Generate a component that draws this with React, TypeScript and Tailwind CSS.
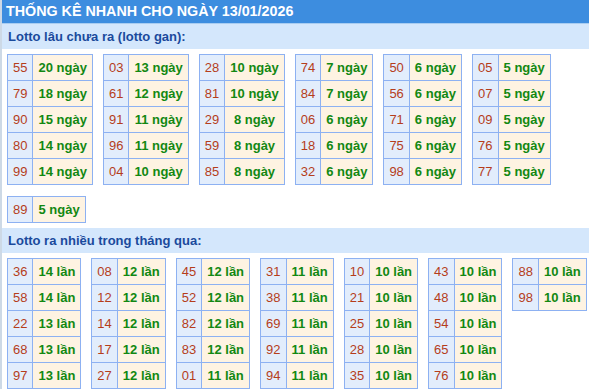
import React from 'react';

type Row = [string, string];

const ganTables: Row[][] = [
  [['55', '20'], ['79', '18'], ['90', '15'], ['80', '14'], ['99', '14']],
  [['03', '13'], ['61', '12'], ['91', '11'], ['96', '11'], ['04', '10']],
  [['28', '10'], ['81', '10'], ['29', '8'], ['59', '8'], ['85', '8']],
  [['74', '7'], ['84', '7'], ['06', '6'], ['18', '6'], ['32', '6']],
  [['50', '6'], ['56', '6'], ['71', '6'], ['75', '6'], ['98', '6']],
  [['05', '5'], ['07', '5'], ['09', '5'], ['76', '5'], ['77', '5']],
];

const ganExtra: Row[][] = [[['89', '5']]];

const nhieuTables: Row[][] = [
  [['36', '14'], ['58', '14'], ['22', '13'], ['68', '13'], ['97', '13']],
  [['08', '12'], ['12', '12'], ['14', '12'], ['17', '12'], ['27', '12']],
  [['45', '12'], ['52', '12'], ['82', '12'], ['83', '12'], ['01', '11']],
  [['31', '11'], ['38', '11'], ['69', '11'], ['92', '11'], ['94', '11']],
  [['10', '10'], ['21', '10'], ['25', '10'], ['28', '10'], ['35', '10']],
  [['43', '10'], ['48', '10'], ['54', '10'], ['65', '10'], ['76', '10']],
  [['88', '10'], ['98', '10']],
];

function StatTable({ rows, unit }: { rows: Row[]; unit: string }) {
  return (
    <table className="border-collapse shrink-0 text-[13px] leading-none">
      <tbody>
        {rows.map(([num, count]) => (
          <tr key={num} className="h-[26px]">
            <td className="border border-[#8db1f2] bg-[#e2edfc] px-[5px] text-center text-[#b53d1b]">
              {num}
            </td>
            <td className="border border-[#8db1f2] bg-[#fef3e2] px-[5px] text-center font-bold text-[#128812] whitespace-nowrap">
              {count} {unit}
            </td>
          </tr>
        ))}
      </tbody>
    </table>
  );
}

function SectionTitle({ children }: { children: React.ReactNode }) {
  return (
    <div className="h-[25px] bg-[#d4e7fc] pl-[6px] flex items-center text-[13px] font-bold text-[#1a4a9c]">
      {children}
    </div>
  );
}

export default function App() {
  return (
    <div
      className="w-[589px] h-[389px] overflow-hidden bg-white border-l-2 border-[#cdd9e6]"
      style={{ fontFamily: '"Liberation Sans", Arial, sans-serif' }}
    >
      <div className="h-[24px] bg-[#3d8ddf] border-b border-[#a9cdf1] pl-[4px] flex items-center text-[14.3px] font-bold text-white">
        THỐNG KÊ NHANH CHO NGÀY 13/01/2026
      </div>

      <SectionTitle>Lotto lâu chưa ra (lotto gan):</SectionTitle>
      <div className="pl-[5px] pt-[5px] pb-[5px] flex flex-col gap-y-[11px]">
        <div className="flex items-start gap-x-[10px]">
          {ganTables.map((rows, i) => (
            <StatTable key={i} rows={rows} unit="ngày" />
          ))}
        </div>
        <div className="flex items-start gap-x-[10px]">
          {ganExtra.map((rows, i) => (
            <StatTable key={i} rows={rows} unit="ngày" />
          ))}
        </div>
      </div>

      <SectionTitle>Lotto ra nhiều trong tháng qua:</SectionTitle>
      <div className="pl-[5px] pt-[5px] flex flex-nowrap items-start gap-x-[10px]">
        {nhieuTables.map((rows, i) => (
          <StatTable key={i} rows={rows} unit="lần" />
        ))}
      </div>
    </div>
  );
}
